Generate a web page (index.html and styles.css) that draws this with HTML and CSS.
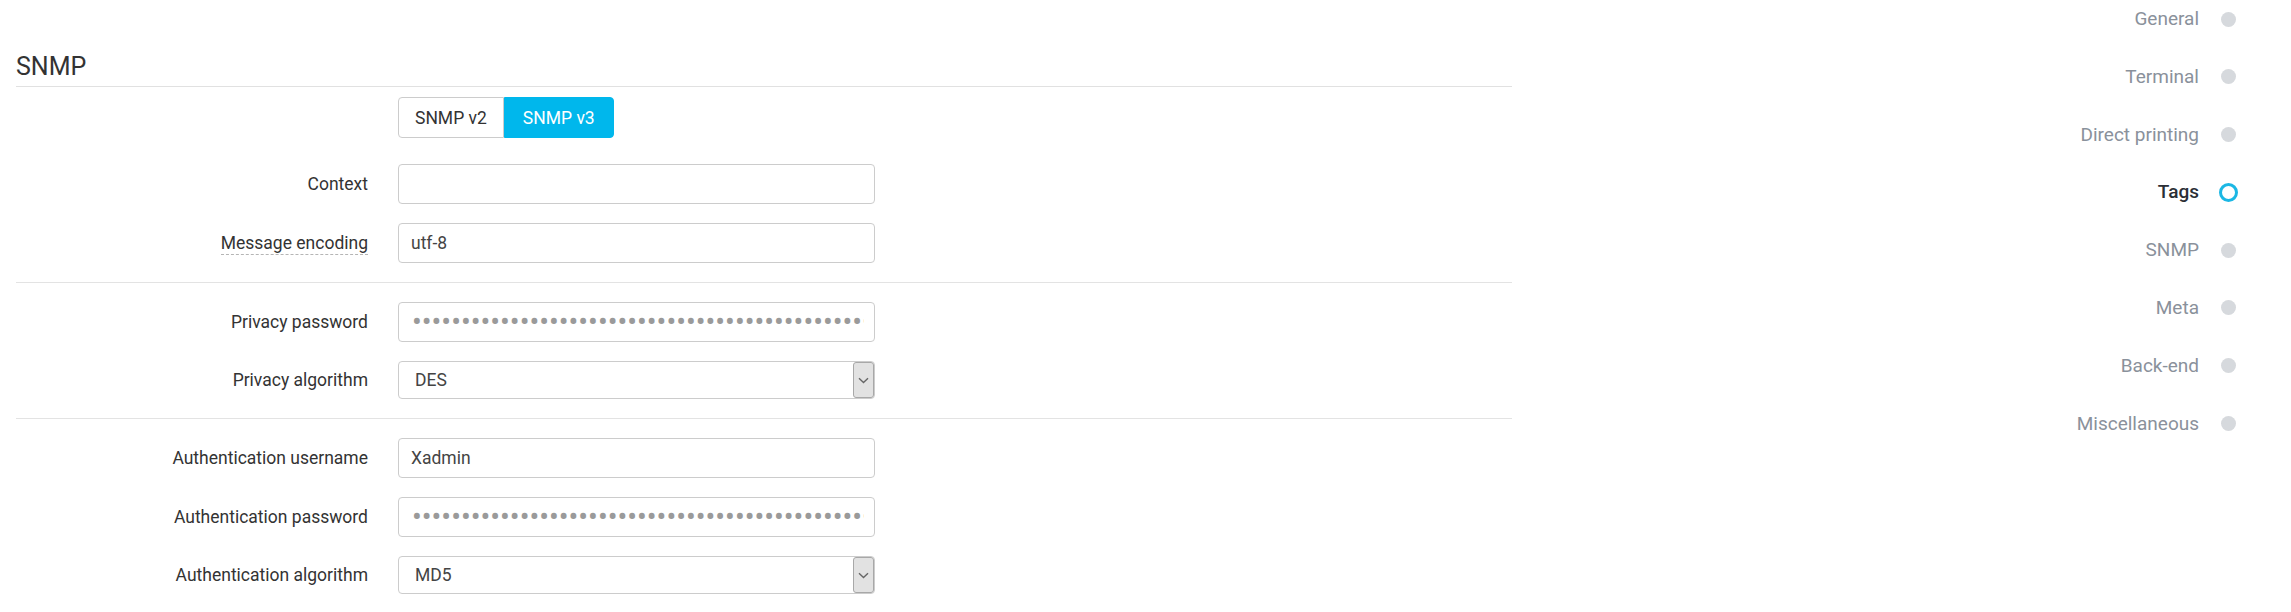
FILE: index.html
```html
<!DOCTYPE html>
<html lang="en">
<head>
<meta charset="utf-8">
<title>SNMP settings</title>
<link rel="stylesheet" href="styles.css">
</head>
<body>
<div class="page">
  <main class="content">
    <h2 class="section-title">SNMP</h2>
    <form class="form">
      <div class="row row-buttons">
        <span class="label"></span>
        <div class="btn-group">
          <button type="button" class="btn">SNMP v2</button>
          <button type="button" class="btn btn-active">SNMP v3</button>
        </div>
      </div>
      <div class="row">
        <label class="label" for="ctx">Context</label>
        <input class="input" id="ctx" type="text" value="">
      </div>
      <div class="row">
        <label class="label" for="enc"><span class="hint">Message encoding</span></label>
        <input class="input" id="enc" type="text" value="utf-8">
      </div>
      <hr class="divider">
      <div class="row">
        <label class="label" for="ppw">Privacy password</label>
        <input class="input input-secret" id="ppw" type="password" value="aaaaaaaaaaaaaaaaaaaaaaaaaaaaaaaaaaaaaaaaaaaaaaaaaaaaaaaa">
      </div>
      <div class="row">
        <label class="label" for="palg">Privacy algorithm</label>
        <div class="select-wrap">
          <select class="select" id="palg">
            <option>DES</option>
            <option>AES</option>
          </select>
          <span class="select-arrow"><svg width="11" height="7" viewBox="0 0 11 7"><path d="M1 1.2 L5.5 5.5 L10 1.2" fill="none" stroke="#666" stroke-width="1.4"/></svg></span>
        </div>
      </div>
      <hr class="divider">
      <div class="row">
        <label class="label" for="aun">Authentication username</label>
        <input class="input" id="aun" type="text" value="Xadmin">
      </div>
      <div class="row">
        <label class="label" for="apw">Authentication password</label>
        <input class="input input-secret" id="apw" type="password" value="aaaaaaaaaaaaaaaaaaaaaaaaaaaaaaaaaaaaaaaaaaaaaaaaaaaaaaaa">
      </div>
      <div class="row">
        <label class="label" for="aalg">Authentication algorithm</label>
        <div class="select-wrap">
          <select class="select" id="aalg">
            <option>MD5</option>
            <option>SHA</option>
          </select>
          <span class="select-arrow"><svg width="11" height="7" viewBox="0 0 11 7"><path d="M1 1.2 L5.5 5.5 L10 1.2" fill="none" stroke="#666" stroke-width="1.4"/></svg></span>
        </div>
      </div>
    </form>
  </main>
  <nav class="toc">
    <a class="toc-item"><span class="toc-text">General</span><span class="toc-slot"><span class="toc-dot"></span></span></a>
    <a class="toc-item"><span class="toc-text">Terminal</span><span class="toc-slot"><span class="toc-dot"></span></span></a>
    <a class="toc-item"><span class="toc-text">Direct printing</span><span class="toc-slot"><span class="toc-dot"></span></span></a>
    <a class="toc-item toc-current"><span class="toc-text">Tags</span><span class="toc-slot"><span class="toc-ring"></span></span></a>
    <a class="toc-item"><span class="toc-text">SNMP</span><span class="toc-slot"><span class="toc-dot"></span></span></a>
    <a class="toc-item"><span class="toc-text">Meta</span><span class="toc-slot"><span class="toc-dot"></span></span></a>
    <a class="toc-item"><span class="toc-text">Back-end</span><span class="toc-slot"><span class="toc-dot"></span></span></a>
    <a class="toc-item"><span class="toc-text">Miscellaneous</span><span class="toc-slot"><span class="toc-dot"></span></span></a>
  </nav>
</div>
</body>
</html>
```

FILE: styles.css
```css
* {
  box-sizing: border-box;
}

html, body {
  margin: 0;
  padding: 0;
  background: #ffffff;
}

body {
  font-family: Roboto, "Liberation Sans", sans-serif;
  color: #333333;
  font-size: 17.5px;
}

.page {
  display: flex;
  align-items: flex-start;
}

.content {
  margin-left: 16px;
  width: 1496px;
  flex: none;
}

.section-title {
  margin: 52px 0 0;
  padding: 0 0 4px;
  font-size: 25px;
  line-height: 30px;
  font-weight: 400;
  color: #333333;
  border-bottom: 1px solid #e1e1e1;
}

.form {
  margin: 0;
  padding-top: 10px;
}

.row {
  display: grid;
  grid-template-columns: 352px 477px;
  column-gap: 30px;
  align-items: center;
  margin-bottom: 19px;
}

.row-buttons {
  margin-bottom: 26px;
}

.label {
  text-align: right;
  color: #333333;
  font-size: 17.5px;
  line-height: 20px;
}

.hint {
  border-bottom: 1px dashed #b5b5b5;
  padding-bottom: 1px;
  cursor: help;
}

.btn-group {
  display: flex;
}

.btn {
  height: 41px;
  padding: 0 16px;
  font-family: Roboto, "Liberation Sans", sans-serif;
  font-size: 17.5px;
  color: #333333;
  background: #ffffff;
  border: 1px solid #cccccc;
  border-radius: 4px 0 0 4px;
  cursor: pointer;
}

.btn-active {
  color: #ffffff;
  background: #00b7ec;
  border-color: #00b7ec;
  border-radius: 0 4px 4px 0;
  padding: 0 18px;
}

.input {
  height: 40px;
  width: 477px;
  padding: 0 12px;
  font-family: Roboto, "Liberation Sans", sans-serif;
  font-size: 17.5px;
  color: #444444;
  background: #ffffff;
  border: 1px solid #cccccc;
  border-radius: 4px;
  outline: none;
}

.input-secret {
  color: #9a9a9a;
  font-size: 29px;
  padding: 0 10px 0 13px;
  letter-spacing: 0;
}

.select-wrap {
  position: relative;
  width: 477px;
  height: 38px;
}

.select {
  appearance: none;
  -webkit-appearance: none;
  width: 100%;
  height: 38px;
  padding: 0 30px 0 16px;
  font-family: Roboto, "Liberation Sans", sans-serif;
  font-size: 17.5px;
  color: #444444;
  background: #ffffff;
  border: 1px solid #cccccc;
  border-radius: 4px;
  outline: none;
}

.select-arrow {
  position: absolute;
  top: 1px;
  right: 1px;
  width: 21px;
  height: 36px;
  display: flex;
  align-items: center;
  justify-content: center;
  background: #e2e2e2;
  border: 1px solid #a8a8a8;
  border-radius: 3px;
  pointer-events: none;
}

.divider {
  margin: 0 0 19px;
  border: 0;
  border-top: 1px solid #e3e3e3;
  height: 0;
}

.toc {
  margin-left: auto;
  padding: 7px 53px 0 0;
  display: flex;
  flex-direction: column;
  align-items: flex-end;
  row-gap: 33.8px;
}

.toc-item {
  display: flex;
  align-items: center;
  height: 24px;
  color: #8a919b;
  font-size: 19px;
  text-decoration: none;
  cursor: pointer;
}

.toc-text {
  line-height: 24px;
}

.toc-slot {
  width: 19px;
  height: 19px;
  margin-left: 20px;
  display: flex;
  align-items: center;
  justify-content: center;
}

.toc-dot {
  width: 15px;
  height: 15px;
  border-radius: 50%;
  background: #d6d9dd;
}

.toc-ring {
  width: 19px;
  height: 19px;
  border-radius: 50%;
  border: 3px solid #1bb7e4;
}

.toc-current {
  color: #2b2f36;
  font-weight: 500;
}
```
